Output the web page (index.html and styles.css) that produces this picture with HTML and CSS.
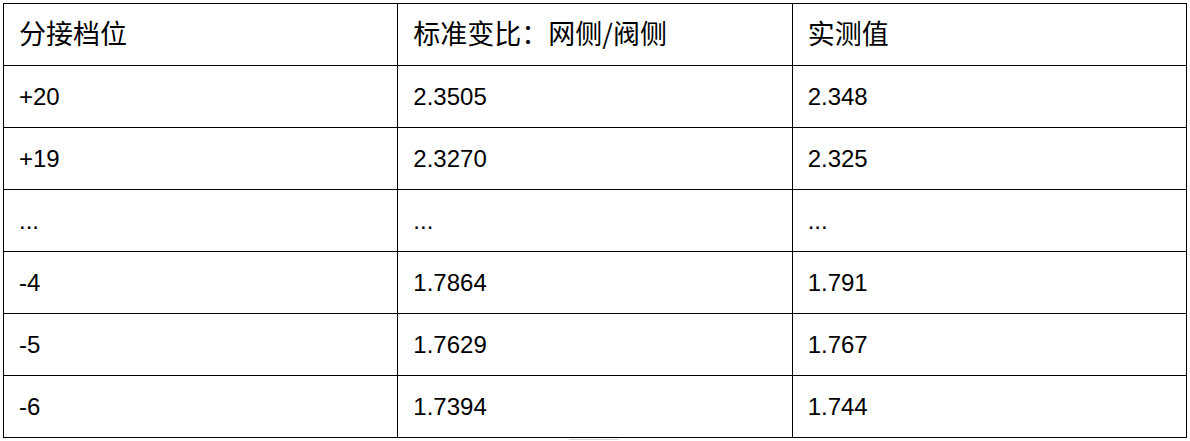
FILE: index.html
```html
<!DOCTYPE html>
<html lang="zh">
<head>
<meta charset="utf-8">
<title>分接档位</title>
<link rel="stylesheet" href="styles.css">
</head>
<body>
<table class="tap-table">
  <tr>
    <td><span class="cjk">分接档位</span></td>
    <td><span class="cjk">标准变比：网侧/阀侧</span></td>
    <td><span class="cjk">实测值</span></td>
  </tr>
  <tr><td>+20</td><td>2.3505</td><td>2.348</td></tr>
  <tr><td>+19</td><td>2.3270</td><td>2.325</td></tr>
  <tr><td>...</td><td>...</td><td>...</td></tr>
  <tr><td>-4</td><td>1.7864</td><td>1.791</td></tr>
  <tr><td>-5</td><td>1.7629</td><td>1.767</td></tr>
  <tr><td>-6</td><td>1.7394</td><td>1.744</td></tr>
</table>
<div class="scroll-hint"></div>
</body>
</html>
```

FILE: styles.css
```css
html, body {
  margin: 0;
  padding: 0;
  background: #fff;
}
body {
  padding: 3px 0 0 3px;
  font-family: "Liberation Sans", Arial, "Noto Sans CJK SC", sans-serif;
  color: #000;
}
.tap-table {
  border-collapse: collapse;
  width: 1184px;
  table-layout: fixed;
}
.tap-table td {
  border: 1px solid #000;
  height: 62px;
  padding: 0 0 0 15px;
  font-size: 24px;
  line-height: 28px;
  vertical-align: middle;
  box-sizing: border-box;
  width: 33.33%;
}
.cjk {
  font-family: "Noto Sans CJK SC", sans-serif;
  font-size: 27px;
}
.scroll-hint {
  width: 50px;
  height: 1px;
  background: #d8d8d8;
  margin: 1px 0 0 566px;
}
```
